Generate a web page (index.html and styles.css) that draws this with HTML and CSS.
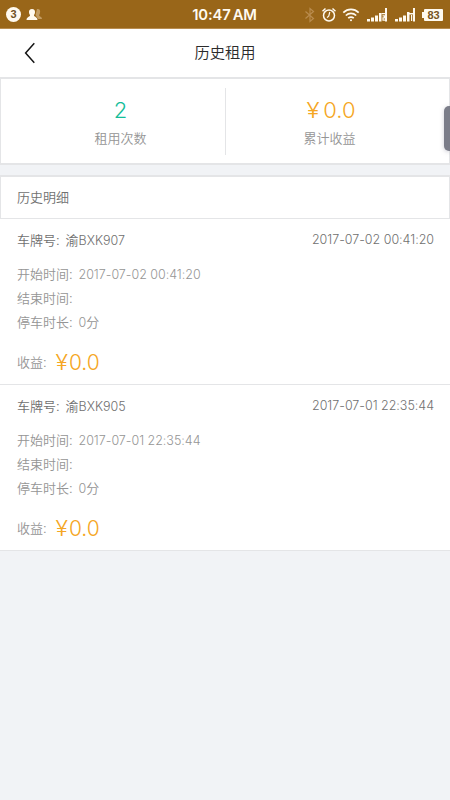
FILE: index.html
```html
<!DOCTYPE html>
<html lang="zh-CN">
<head>
<meta charset="utf-8">
<title>历史租用</title>
<link rel="stylesheet" href="styles.css">
</head>
<body>
<header class="status">
  <div class="status-left">
    <span class="count">3</span>
    <svg class="people" width="17" height="13" viewBox="0 0 17 13"><path fill="#c39c62" d="M11 1c3 0 3.500 1.500 3 4-.2 1.200-.8 1.600-.8 2.500 0 1 2.800 1 2.800 3.500h-4L9.500 7z"/><path fill="#fffaf0" d="M6 1c2.200 0 3.200 1.300 3 3.500C8.900 6 8 6.500 8 7.500c0 1.300 3.200 1 3.500 4.500H.5c.3-3.500 3.500-3.200 3.500-4.500C4 6.500 3.100 6 3 4.500 2.800 2.300 3.800 1 6 1z"/></svg>
  </div>
  <div class="clock">10:47<span>AM</span></div>
  <div class="status-right">
    <svg width="12" height="16" viewBox="0 0 12 16" fill="none" stroke="#b98c4e" stroke-width="1.200"><path d="M1.500 4.500l8 7L6 14.500v-13l3.500 3-8 7"/></svg>
    <svg width="16" height="16" viewBox="0 0 16 16" fill="none" stroke="#fffaf0" stroke-width="1.500"><circle cx="8" cy="8.500" r="5.500"/><path stroke-width="1.200" d="M8.800 5L7.800 9l-1.700 1.700"/><path d="M1.500 4.200l3-2.700M14.500 4.200l-3-2.700"/></svg>
    <svg width="18" height="14" viewBox="0 0 18 14" fill="none" stroke="#fffaf0" stroke-width="1.700"><path d="M1.300 4.600c4.500-4.200 10.900-4.200 15.400 0M3.800 7.500c3-2.800 7.400-2.800 10.400 0M6.200 10.200c1.700-1.400 3.900-1.400 5.600 0"/><circle cx="9" cy="12.200" r="1" fill="#fffaf0" stroke="none"/></svg>
    <svg class="signal" width="22" height="14" viewBox="0 0 22 14" fill="#fffaf0"><path d="M1 11h3v2.500H1zM5 9.500h3v4H5zM9 7.500h3v6H9zM13 5h2.500v8.500H13zM19 0h2v13.500h-2z"/><path fill="none" stroke="#fffaf0" stroke-width="1.200" d="M15.500 5.600h4M16.500 7.900h2v2h-1.500v2.300h2.500"/></svg>
    <svg class="signal" width="22" height="14" viewBox="0 0 22 14" fill="#fffaf0"><path d="M1 11h3v2.500H1zM5 9.500h3v4H5zM9 7.500h3v6H9zM13 4h2.500v9.500H13zM19 0h2v13.500h-2zM15.500 5h4v1.500h-4zM17 6v7h1.200V6z"/></svg>
    <span class="battery">83</span>
  </div>
</header>
<nav class="titlebar">
  <svg class="back" width="12" height="22" viewBox="0 0 12 22" fill="none" stroke="#151515" stroke-width="1.500"><path d="M10.300 1.300L1.600 11l8.700 9.700"/></svg>
  <h1>历史租用</h1>
</nav>
<main>
  <section class="stats">
    <div class="stat"><div class="num green">2</div><div class="label">租用次数</div></div>
    <div class="stat"><div class="num"><span class="yen">¥</span>0.0</div><div class="label">累计收益</div></div>
  </section>
  <h2>历史明细</h2>
  <article class="record">
    <div class="head"><span>车牌号<i>:</i>渝<b>BXK907</b></span><time>2017-07-02 00:41:20</time></div>
    <p>开始时间<i>:</i><b>2017-07-02 00:41:20</b></p>
    <p>结束时间<i>:</i></p>
    <p>停车时长<i>:</i><b>0</b>分</p>
    <div class="income"><span>收益<i>:</i></span><span class="num"><span class="yen">¥</span>0.0</span></div>
  </article>
  <article class="record">
    <div class="head"><span>车牌号<i>:</i>渝<b>BXK905</b></span><time>2017-07-01 22:35:44</time></div>
    <p>开始时间<i>:</i><b>2017-07-01 22:35:44</b></p>
    <p>结束时间<i>:</i></p>
    <p>停车时长<i>:</i><b>0</b>分</p>
    <div class="income"><span>收益<i>:</i></span><span class="num"><span class="yen">¥</span>0.0</span></div>
  </article>
</main>
<div class="handle"></div>
</body>
</html>
```
FILE: styles.css
```css
* { box-sizing: border-box; margin: 0; padding: 0; }
body {
  width: 450px; height: 800px; overflow: hidden; position: relative;
  background: #f1f3f6; color: #959595;
  font: 350 13px/20px "Liberation Sans", "Noto Sans CJK SC", sans-serif;
}
i { font-style: normal; display: inline-block; width: 9.500px; }
b, time { font-family: Inter, sans-serif; font-weight: 300; font-size: 12.500px; line-height: 1; }
time, p b { letter-spacing: -.02px; }
.status {
  height: 29px; background: #996619; border-bottom: 1px solid #b98d50; color: #fffaf0;
  display: grid; grid-template-columns: 1fr auto 1fr; align-items: center; padding: 0 7px 0 6px;
}
.status-left, .status-right { display: flex; align-items: center; height: 28px; }
.status-left { gap: 5px; }
.count {
  width: 15px; height: 15px; border-radius: 50%; background: #fffaf0; color: #70501f;
  font: 700 11px/15px "Liberation Sans", sans-serif; text-align: center;
}
.clock { font: 600 14.800px/28px Inter, sans-serif; letter-spacing: -.15px; padding-top: 1px; }
.clock span { margin-left: 2px; }
.status-right { justify-content: flex-end; gap: 5px; }
.signal { margin-left: 1px; }
.battery {
  width: 19px; height: 12px; background: #fffaf0; color: #76551f; border-radius: 1px; position: relative;
  font: 700 11px/12px "Liberation Sans", sans-serif; text-align: center; margin-left: 3px;
}
.battery::before { content: ""; position: absolute; left: -2px; top: 3px; width: 2px; height: 6px; background: #fffaf0; }
.titlebar {
  height: 48px; background: #fff; display: grid; grid-template-columns: 24px 1fr 24px;
  align-items: center; padding: 0 24px;
}
h1 { font-size: 15.300px; font-weight: 350; line-height: 22px; color: #2b2b2b; text-align: center; }
.stats {
  height: 88px; background: #fff; border: 1px solid #e4e5e7; border-top-width: 2px; border-bottom-width: 2px;
  display: grid; grid-template-columns: 1fr 1fr; padding: 9px 0 8px;
}
.stat { text-align: center; padding-top: 8px; padding-left: 15px; }
.stat + .stat { border-left: 1px solid #e4e5e7; padding-left: 0; padding-right: 12px; }
.stat + .stat .label { margin-right: 4px; }
.num { font: 300 22px/28px Inter, "Liberation Sans", sans-serif; color: #f5a623; }
.green { color: #14bd99; }
.yen { display: inline-block; margin-right: 4px; transform: scaleX(1.1); }
.label { line-height: 22px; margin-top: 4px; }
h2 {
  height: 44px; margin-top: 10px; padding: 0 16px; background: #fff; color: #707070;
  border: 1px solid #e4e5e7; border-top-width: 2px; font-size: 13px; font-weight: 350; line-height: 42px;
}
.record { height: 166px; background: #fff; border-bottom: 1px solid #e4e5e7; padding: 10.500px 16px 0 17px; }
.head { display: flex; justify-content: space-between; align-items: center; color: #707070; line-height: 22px; margin-bottom: 11px; }
.record p { height: 24.400px; line-height: 24.400px; }
.income { display: flex; align-items: center; margin-top: 13px; line-height: 28px; }
.income .num { margin-left: 3px; font-size: 21px; }
.income .yen { margin-right: 2px; }
.handle {
  position: absolute; right: 0; top: 106px; width: 6px; height: 45px;
  border-radius: 5px 0 0 5px; background: #7b7d89; box-shadow: 0 1px 4px #9999aa80;
}
```
